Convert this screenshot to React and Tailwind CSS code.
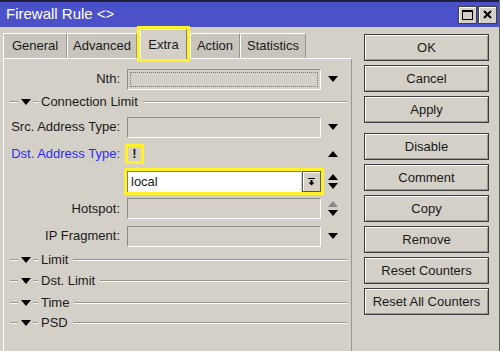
import React from "react";

// ── Small drawings ───────────────────────────────────────────────────────────
function Down({ color = "#000" }) {
  return (
    <svg width="10" height="6" viewBox="0 0 10 6" className="block">
      <polygon points="0,0 10,0 5,6" fill={color} />
    </svg>
  );
}

function Up({ color = "#000" }) {
  return (
    <svg width="10" height="6" viewBox="0 0 10 6" className="block">
      <polygon points="0,6 10,6 5,0" fill={color} />
    </svg>
  );
}

function Etch({ className = "" }) {
  return (
    <div className={`h-[2px] border-t border-[#9a968e] border-b border-b-white ${className}`} />
  );
}

// ── Pieces ───────────────────────────────────────────────────────────────────
const TABS = [
  { name: "General", w: "w-[64px]" },
  { name: "Advanced", w: "w-[70px]" },
  { name: "Extra", w: "w-[47px]", active: true },
  { name: "Action", w: "w-[50px]" },
  { name: "Statistics", w: "w-[66px]" },
];

function Tab({ tab }) {
  if (tab.active) {
    return (
      <div className="mx-[3px] mb-[-1px] relative z-10">
        <div className="w-[47px] h-[30px] bg-[#d4d0c8] border-l border-t border-white border-r border-r-[#808080] outline-[3px] outline-solid outline-[#fff22c] flex items-center justify-center">
          Extra
        </div>
      </div>
    );
  }
  return (
    <div
      className={`${tab.w} h-[25px] bg-[#c9c5bd] border-l border-t border-white border-r border-r-[#9a968e] flex items-center justify-center`}
    >
      {tab.name}
    </div>
  );
}

function Field({ dotted }) {
  return (
    <div className="w-[194px] h-[21px] border-t border-l border-[#8c8a84] border-b border-r border-b-white border-r-white p-[2px]">
      {dotted && <div className="w-full h-full border border-dotted border-[#7a7872]" />}
    </div>
  );
}

function Row({ label, h, blue, children, arrows }) {
  return (
    <div className={`flex items-center ${h}`}>
      <div className={`w-[117px] text-right pr-[1px] ${blue ? "text-[#2b2bff]" : "text-[#1a1a1a]"}`}>
        {label}
      </div>
      <div className="ml-[6px] w-[194px] flex items-center">{children}</div>
      <div className="ml-[3px] w-[18px] flex flex-col items-center gap-[3px]">{arrows}</div>
    </div>
  );
}

function Section({ label, h }) {
  return (
    <div className={`flex items-center ${h}`}>
      <Etch className="ml-[6px] w-[8px]" />
      <div className="ml-[3px]">
        <Down />
      </div>
      <Etch className="ml-[2px] w-[5px]" />
      <span className="ml-[3px]">{label}</span>
      <Etch className="ml-[5px] flex-1 mr-[4px]" />
    </div>
  );
}

function Button({ children, className = "" }) {
  return (
    <div
      className={`h-[27px] w-[125px] border border-[#3c3c3c] shadow-[inset_1px_1px_0_#fff,inset_-1px_-1px_0_#9a968e] flex items-center justify-center ${className}`}
    >
      {children}
    </div>
  );
}

// ── App ──────────────────────────────────────────────────────────────────────
export default function App() {
  return (
    <div className="w-[500px] h-[351px] overflow-hidden bg-[#d4d0c8] text-[13px] text-[#1a1a1a] font-['Liberation_Sans',Arial,sans-serif] border-r border-r-[#606060]">
      {/* Title bar */}
      <div className="h-[27px] border-t-2 border-[#20203a] bg-[#4b52c9] flex items-center pl-[6px] pr-[2px]">
        <span className="text-white text-[15px]">Firewall Rule &lt;&gt;</span>
        <div className="ml-auto flex gap-[1px]">
          <div className="w-[19px] h-[18px] bg-[#d4d0c8] border border-[#404040] shadow-[inset_1px_1px_0_#fff] flex items-center justify-center">
            <div className="w-[11px] h-[10px] border border-black border-t-2" />
          </div>
          <div className="w-[19px] h-[18px] bg-[#d4d0c8] border border-[#404040] shadow-[inset_1px_1px_0_#fff] flex items-center justify-center">
            <svg width="9" height="9" viewBox="0 0 9 9">
              <path d="M1 1 L8 8 M8 1 L1 8" stroke="#000" strokeWidth="2" />
            </svg>
          </div>
        </div>
      </div>

      <div className="flex pl-[3px]">
        {/* Left: tabs + panel */}
        <div className="w-[349px] flex flex-col">
          <div className="h-[31px] flex items-end">
            {TABS.map((t) => (
              <Tab key={t.name} tab={t} />
            ))}
          </div>
          <div className="h-[293px] border-l border-t border-white border-r border-r-[#9a968e] pt-[8px]">
            <Row label="Nth:" h="h-[24px]" arrows={<Down />}>
              <Field dotted />
            </Row>
            <Section label="Connection Limit" h="h-[22px]" />
            <Row label="Src. Address Type:" h="h-[28px]" arrows={<Down />}>
              <Field />
            </Row>
            <Row label="Dst. Address Type:" h="h-[26px]" blue arrows={<Up />}>
              <div className="ml-[1px] w-[13px] h-[14px] outline-[3px] outline-solid outline-[#fff22c] flex items-center justify-center font-bold">
                !
              </div>
            </Row>
            <Row
              label=""
              h="h-[28px]"
              arrows={
                <>
                  <Up />
                  <Down />
                </>
              }
            >
              <div className="w-[194px] h-[21px] flex outline-[3px] outline-solid outline-[#fff22c]">
                <div className="w-[174px] h-full bg-white border-t border-l border-[#808080] flex items-center pl-[3px]">
                  local
                </div>
                <div className="ml-[1px] w-[19px] h-full border border-[#5a5a5a] shadow-[inset_1px_1px_0_#fff] flex items-center justify-center">
                  <svg width="9" height="9" viewBox="0 0 9 9">
                    <path d="M1 1.5 H8" stroke="#000" strokeWidth="1" />
                    <path d="M4.5 3 V6" stroke="#000" strokeWidth="2" />
                    <polygon points="1.5,5.5 7.5,5.5 4.5,8.5" fill="#000" />
                  </svg>
                </div>
              </div>
            </Row>
            <Row
              label="Hotspot:"
              h="h-[27px]"
              arrows={
                <>
                  <Up color="#8c8a84" />
                  <Down />
                </>
              }
            >
              <Field />
            </Row>
            <Row label="IP Fragment:" h="h-[28px]" arrows={<Down />}>
              <Field />
            </Row>
            <Section label="Limit" h="h-[20px]" />
            <Section label="Dst. Limit" h="h-[22px]" />
            <Section label="Time" h="h-[21px]" />
            <Section label="PSD" h="h-[20px]" />
          </div>
        </div>

        {/* Right: buttons */}
        <div className="ml-[12px] pt-[7px] flex flex-col gap-[4px]">
          <Button>OK</Button>
          <Button>Cancel</Button>
          <Button>Apply</Button>
          <Button className="mt-[6px]">Disable</Button>
          <Button>Comment</Button>
          <Button>Copy</Button>
          <Button>Remove</Button>
          <Button>Reset Counters</Button>
          <Button>Reset All Counters</Button>
        </div>
      </div>
    </div>
  );
}
